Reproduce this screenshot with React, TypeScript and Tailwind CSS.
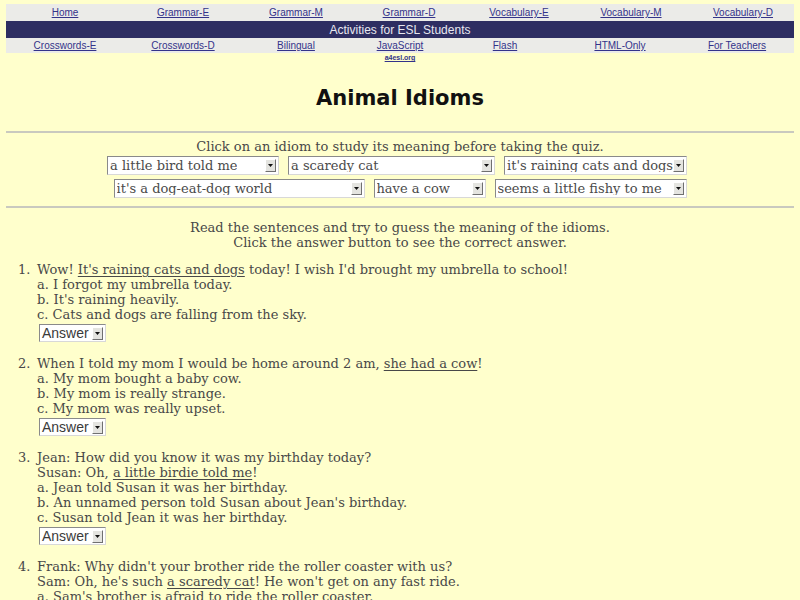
import React from 'react'

const topLinks = ['Home', 'Grammar-E', 'Grammar-M', 'Grammar-D', 'Vocabulary-E', 'Vocabulary-M', 'Vocabulary-D']
const bottomLinks = ['Crosswords-E', 'Crosswords-D', 'Bilingual', 'JavaScript', 'Flash', 'HTML-Only', 'For Teachers']

const Arrow = () => (
    <span className="flex items-center justify-center w-[11px] h-[13px] bg-[#e4e4e0] border border-t-white border-l-white border-b-[#707070] border-r-[#707070]">
        <svg width="5" height="3" viewBox="0 0 5 3">
            <path d="M0 0h5L2.5 3z" fill="#111" />
        </svg>
    </span>
)

const Dropdown = ({ label, width }: { label: string; width: string }) => (
    <div className={`${width} h-[19px] flex items-center justify-between bg-white border border-t-[#8a8a8a] border-l-[#8a8a8a] border-b-[#d8d8d8] border-r-[#d8d8d8] pl-[2px] pr-[2px]`}>
        <span className="text-[13px] leading-none text-[#4a4a4a] whitespace-nowrap overflow-hidden">{label}</span>
        <Arrow />
    </div>
)

const AnswerBox = () => (
    <div className="mt-[2px] ml-[2px] w-[67px] h-[18px] flex items-center justify-between bg-white border border-t-[#8a8a8a] border-l-[#8a8a8a] border-b-[#d8d8d8] border-r-[#d8d8d8] pl-[2px] pr-[2px] font-['Liberation_Sans',Arial,sans-serif]">
        <span className="text-[14px] leading-none text-[#3a3a3a]">Answer</span>
        <Arrow />
    </div>
)

const Idiom = ({ children }: { children: React.ReactNode }) => <span className="underline underline-offset-2">{children}</span>

const Question = ({ n, lines }: { n: number; lines: React.ReactNode[] }) => (
    <div className="flex mb-[14px]">
        <div className="w-[31px] pl-[12px] shrink-0">{n}.</div>
        <div>
            {lines.map((l, i) => (
                <div key={i}>{l}</div>
            ))}
            <AnswerBox />
        </div>
    </div>
)

export default function App() {
    return (
        <div className="min-h-screen bg-[#ffffcc] px-[6px] pt-[4px] font-['DejaVu_Serif',serif] text-[#484848]">
            {/* site navigation */}
            <div className="font-['Liberation_Sans',Arial,sans-serif]">
                <div className="grid grid-cols-[118px_118px_108px_118px_102px_122px_1fr] h-[17px] bg-[#ebebe8] items-center">
                    {topLinks.map(l => (
                        <a key={l} className="text-center text-[10px] text-[#33338a] underline">{l}</a>
                    ))}
                </div>
                <div className="h-[17px] bg-[#2e2e62] flex items-center justify-center text-[12px] text-[#e8e8f0]">
                    Activities for ESL Students
                </div>
                <div className="grid grid-cols-[118px_118px_108px_100px_110px_120px_1fr] h-[15px] bg-[#ebebe8] items-center">
                    {bottomLinks.map(l => (
                        <a key={l} className="text-center text-[10px] text-[#33338a] underline">{l}</a>
                    ))}
                </div>
                <div className="text-center text-[7px] font-bold leading-[10px] text-[#33338a] underline">a4esl.org</div>
            </div>

            <h1 className="mt-[20px] text-center text-[21px] font-bold leading-[30px] text-[#111] font-['DejaVu_Sans',sans-serif]">
                Animal Idioms
            </h1>

            <hr className="mt-[18px] border-t-2 border-[#c9c9bf]" />

            <div className="text-center text-[13px] leading-[15px] mt-[6px]">
                Click on an idiom to study its meaning before taking the quiz.
            </div>
            <div className="flex justify-center gap-[9px] mt-[2px] pr-[6px]">
                <Dropdown label="a little bird told me" width="w-[172px]" />
                <Dropdown label="a scaredy cat" width="w-[207px]" />
                <Dropdown label="it's raining cats and dogs" width="w-[183px]" />
            </div>
            <div className="flex justify-center gap-[9px] mt-[4px]">
                <Dropdown label="it's a dog-eat-dog world" width="w-[251px]" />
                <Dropdown label="have a cow" width="w-[112px]" />
                <Dropdown label="seems a little fishy to me" width="w-[192px]" />
            </div>

            <hr className="mt-[8px] border-t-2 border-[#c9c9bf]" />

            <div className="mt-[12px] text-center text-[13px] leading-[15px]">
                <div>Read the sentences and try to guess the meaning of the idioms.</div>
                <div>Click the answer button to see the correct answer.</div>
            </div>

            <div className="mt-[12px] text-[13px] leading-[15px]">
                <Question
                    n={1}
                    lines={[
                        <>Wow! <Idiom>It's raining cats and dogs</Idiom> today! I wish I'd brought my umbrella to school!</>,
                        'a. I forgot my umbrella today.',
                        "b. It's raining heavily.",
                        'c. Cats and dogs are falling from the sky.',
                    ]}
                />
                <Question
                    n={2}
                    lines={[
                        <>When I told my mom I would be home around 2 am, <Idiom>she had a cow</Idiom>!</>,
                        'a. My mom bought a baby cow.',
                        'b. My mom is really strange.',
                        'c. My mom was really upset.',
                    ]}
                />
                <Question
                    n={3}
                    lines={[
                        'Jean: How did you know it was my birthday today?',
                        <>Susan: Oh, <Idiom>a little birdie told me</Idiom>!</>,
                        'a. Jean told Susan it was her birthday.',
                        "b. An unnamed person told Susan about Jean's birthday.",
                        'c. Susan told Jean it was her birthday.',
                    ]}
                />
                <Question
                    n={4}
                    lines={[
                        "Frank: Why didn't your brother ride the roller coaster with us?",
                        <>Sam: Oh, he's such <Idiom>a scaredy cat</Idiom>! He won't get on any fast ride.</>,
                        "a. Sam's brother is afraid to ride the roller coaster.",
                        "b. Sam's brother is a cat.",
                        "c. Sam's brother doesn't like cats.",
                    ]}
                />
            </div>
        </div>
    )
}
